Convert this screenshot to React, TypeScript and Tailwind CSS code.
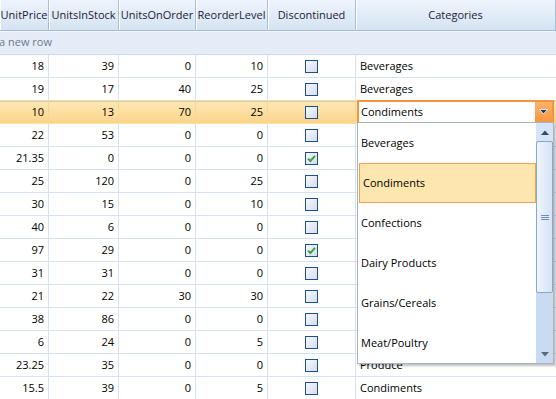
import React from "react";

type Row = {
  price: string;
  stock: string;
  order: string;
  level: string;
  disc: boolean;
  cat: string;
};

// rows 4-13 sit under the open dropdown, so their category text is not shown
const rows: Row[] = [
  { price: "18", stock: "39", order: "0", level: "10", disc: false, cat: "Beverages" },
  { price: "19", stock: "17", order: "40", level: "25", disc: false, cat: "Beverages" },
  { price: "10", stock: "13", order: "70", level: "25", disc: false, cat: "Condiments" },
  { price: "22", stock: "53", order: "0", level: "0", disc: false, cat: "" },
  { price: "21.35", stock: "0", order: "0", level: "0", disc: true, cat: "" },
  { price: "25", stock: "120", order: "0", level: "25", disc: false, cat: "" },
  { price: "30", stock: "15", order: "0", level: "10", disc: false, cat: "" },
  { price: "40", stock: "6", order: "0", level: "0", disc: false, cat: "" },
  { price: "97", stock: "29", order: "0", level: "0", disc: true, cat: "" },
  { price: "31", stock: "31", order: "0", level: "0", disc: false, cat: "" },
  { price: "21", stock: "22", order: "30", level: "30", disc: false, cat: "" },
  { price: "38", stock: "86", order: "0", level: "0", disc: false, cat: "" },
  { price: "6", stock: "24", order: "0", level: "5", disc: false, cat: "" },
  { price: "23.25", stock: "35", order: "0", level: "0", disc: false, cat: "Produce" },
  { price: "15.5", stock: "39", order: "0", level: "5", disc: false, cat: "Condiments" },
];

const categories = ["Beverages", "Condiments", "Confections", "Dairy Products", "Grains/Cereals", "Meat/Poultry"];

const headers = ["UnitPrice", "UnitsInStock", "UnitsOnOrder", "ReorderLevel", "Discontinued", "Categories"];

const gridCols = "grid grid-cols-[49px_70px_77px_72px_88px_200px]";

function CheckBox({ checked }: { checked: boolean }) {
  return (
    <span className="flex h-[13px] w-[13px] items-center justify-center border border-[#1d4f8c] bg-gradient-to-br from-[#f6f8fc] to-[#d5dceb]">
      {checked && (
        <svg width="9" height="9" viewBox="0 0 9 9">
          <path d="M1 4.6 L3.4 7 L8 1.8" fill="none" stroke="#3aa640" strokeWidth="2" />
        </svg>
      )}
    </span>
  );
}

function NumCell({ v, selected }: { v: string; selected: boolean }) {
  return (
    <div
      className={
        "flex items-center justify-end border-r pr-[4px] " +
        (selected ? "border-[#f5d895]" : "border-[#d5e2f3]")
      }
    >
      {v}
    </div>
  );
}

export default function App() {
  return (
    <div className="relative h-[399px] w-[556px] overflow-hidden bg-white font-['Open_Sans',sans-serif] text-[11px] text-black">
      {/* header */}
      <div className={gridCols + " h-[31px] border-b border-[#9fb9da] bg-gradient-to-b from-[#eef4fc] to-[#d6e3f3]"}>
        {headers.map((h) => (
          <div
            key={h}
            className="flex items-center justify-center overflow-hidden whitespace-nowrap border-r border-[#a9c0dd] pt-[1px] text-[#1a2233] shadow-[inset_1px_0_0_#ffffff]"
          >
            {h}
          </div>
        ))}
      </div>

      {/* new row */}
      <div className="flex h-[24px] items-center border-b border-[#c9d9ee] bg-[#e5ecf7] text-[#6a7b92] shadow-[inset_0_1px_0_#f4f7fc]">
        <span className="-ml-[1px]">a new row</span>
      </div>

      {/* data rows */}
      {rows.map((r, i) => {
        const selected = i === 2;
        return (
          <div
            key={i}
            className={
              gridCols +
              " h-[23px] border-b " +
              (selected
                ? "border-[#fbe3a6] bg-gradient-to-b from-[#fee9b6] to-[#fbd48a] shadow-[inset_0_1px_0_#f5c46f]"
                : "border-[#d5e2f3]")
            }
          >
            <NumCell v={r.price} selected={selected} />
            <NumCell v={r.stock} selected={selected} />
            <NumCell v={r.order} selected={selected} />
            <NumCell v={r.level} selected={selected} />
            <div
              className={
                "flex items-center justify-center border-r " +
                (selected ? "border-[#f5d895]" : "border-[#d5e2f3]")
              }
            >
              <CheckBox checked={r.disc} />
            </div>
            {selected ? (
              <div className="flex items-stretch">
                <div className="-mt-[1px] ml-[1px] mr-[2px] flex h-[24px] flex-1 items-center border-2 border-[#f7953f] bg-white">
                  <span className="flex-1 pl-[2px] pt-[1px]">{r.cat}</span>
                  <span className="flex h-full w-[17px] items-center justify-center bg-gradient-to-b from-[#fcb36a] to-[#f7953f]">
                    <svg width="9" height="6" viewBox="0 0 9 6">
                      <path d="M0.5 0.5 H8.5 L4.5 5 Z" fill="#1b3866" stroke="#ffffff" strokeWidth="0.8" />
                    </svg>
                  </span>
                </div>
              </div>
            ) : (
              <div className="flex items-center overflow-hidden whitespace-nowrap pl-[4px]">{r.cat}</div>
            )}
          </div>
        );
      })}

      {/* dropdown list */}
      <div className="absolute left-[357px] top-[122px] flex h-[242px] w-[197px] border border-[#a7b3c4] bg-white shadow-[2px_2px_2px_rgba(0,0,0,0.25)]">
        <div className="flex flex-1 flex-col">
          {categories.map((c) => (
            <div
              key={c}
              className={
                "flex h-[40px] items-center pl-[3px] " +
                (c === "Condiments" ? "ml-[1px] border border-[#f7a04f] bg-[#fde7ae] pl-[2px]" : "")
              }
            >
              {c}
            </div>
          ))}
        </div>
        <div className="flex w-[17px] flex-col bg-[#c9dbf1]">
          <div className="flex h-[18px] items-center justify-center bg-[#d5e4f6]">
            <svg width="8" height="5" viewBox="0 0 8 5">
              <path d="M0 5 L4 0.5 L8 5 Z" fill="#3c4a5f" />
            </svg>
          </div>
          <div className="flex h-[152px] items-center justify-center rounded-[2px] border border-[#8aa6cb] bg-gradient-to-r from-[#eef4fc] to-[#d6e4f6]">
            <svg width="8" height="5" viewBox="0 0 8 5">
              <path d="M0 0.5 H8 M0 2.5 H8 M0 4.5 H8" stroke="#6f8db8" strokeWidth="1" />
            </svg>
          </div>
          <div className="flex flex-1 items-end justify-center pb-[6px]">
            <svg width="8" height="5" viewBox="0 0 8 5">
              <path d="M0 0 L8 0 L4 4.5 Z" fill="#5c6a7e" />
            </svg>
          </div>
        </div>
      </div>
    </div>
  );
}
